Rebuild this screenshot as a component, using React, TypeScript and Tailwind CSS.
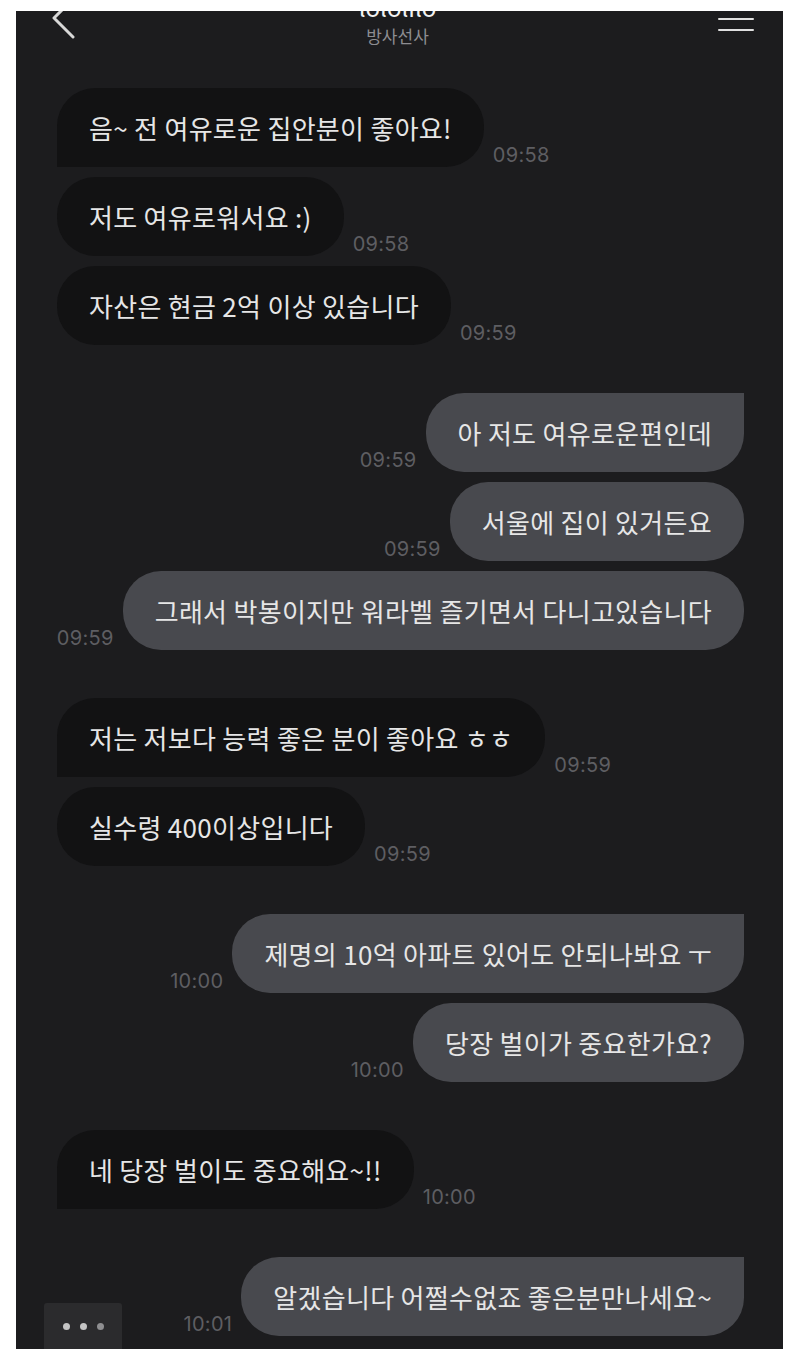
import React from "react";

type Msg = {
  text: string;
  time: string;
  mine: boolean;
  first?: boolean; // first bubble of a group gets one squared corner
  groupStart?: boolean;
};

const MESSAGES: Msg[] = [
  { text: "음~ 전 여유로운 집안분이 좋아요!", time: "09:58", mine: false, first: true, groupStart: true },
  { text: "저도 여유로워서요 :)", time: "09:58", mine: false },
  { text: "자산은 현금 2억 이상 있습니다", time: "09:59", mine: false },
  { text: "아 저도 여유로운편인데", time: "09:59", mine: true, first: true, groupStart: true },
  { text: "서울에 집이 있거든요", time: "09:59", mine: true },
  { text: "그래서 박봉이지만 워라벨 즐기면서 다니고있습니다", time: "09:59", mine: true },
  { text: "저는 저보다 능력 좋은 분이 좋아요 ㅎㅎ", time: "09:59", mine: false, first: true, groupStart: true },
  { text: "실수령 400이상입니다", time: "09:59", mine: false },
  { text: "제명의 10억 아파트 있어도 안되나봐요 ㅜ", time: "10:00", mine: true, first: true, groupStart: true },
  { text: "당장 벌이가 중요한가요?", time: "10:00", mine: true },
  { text: "네 당장 벌이도 중요해요~!!", time: "10:00", mine: false, first: true, groupStart: true },
  { text: "알겠습니다 어쩔수없죠 좋은분만나세요~", time: "10:01", mine: true, first: true, groupStart: true },
];

const KR = { fontFamily: '"Noto Sans CJK KR", "Noto Sans", sans-serif' };

function Bubble({ msg }: { msg: Msg }) {
  const time = (
    <span
      className="mb-[2px] shrink-0 text-[20px] leading-none tracking-[0.3px] text-[#5e5e62]"
      style={{ fontFamily: "Inter, sans-serif" }}
    >
      {msg.time}
    </span>
  );

  const shape = msg.mine
    ? msg.first
      ? "rounded-[38px] rounded-tr-none bg-[#48494e]"
      : "rounded-[38px] bg-[#48494e]"
    : msg.first
      ? "rounded-[38px] rounded-bl-none bg-[#121213]"
      : "rounded-[38px] bg-[#121213]";

  return (
    <div
      className={`flex items-end gap-[9px] ${msg.mine ? "justify-end" : "justify-start"} ${
        msg.groupStart ? "mt-[48px] first:mt-0" : "mt-[10px]"
      }`}
    >
      {msg.mine && time}
      <div
        className={`flex h-[79px] shrink-0 items-center whitespace-nowrap px-8 text-[26px] tracking-[0.3px] text-[#e6e6e6] ${shape}`}
        style={KR}
      >
        {msg.text}
      </div>
      {!msg.mine && time}
    </div>
  );
}

export default function App() {
  return (
    <div className="h-[1355px] w-[800px] bg-white pl-4 pt-[11px]">
      <div className="relative flex h-[1338px] w-[767px] flex-col overflow-hidden bg-[#1c1c1e]">
        {/* header */}
        <div className="relative flex h-[77px] shrink-0 items-start justify-between">
          <svg
            width="30"
            height="50"
            viewBox="0 0 30 50"
            className="ml-[31px] mt-[-19px]"
            fill="none"
          >
            <polyline
              points="26,7 7,26 26,45"
              stroke="#d8d8d8"
              strokeWidth="3"
              strokeLinecap="round"
              strokeLinejoin="round"
            />
          </svg>

          <div className="mt-[-17px] flex flex-col items-center" style={KR}>
            <span className="text-[24px] leading-[26px] text-[#f2f2f2]">lololilo</span>
            <span className="mt-[6px] text-[17px] leading-[20px] text-[#8d8d91]">방사선사</span>
          </div>

          <div className="mr-[29px] mt-[-4px] flex w-[36px] flex-col gap-[9px]">
            <div className="h-[2px] rounded-full bg-[#e0e0e0]" />
            <div className="h-[2px] rounded-full bg-[#e0e0e0]" />
            <div className="h-[2px] rounded-full bg-[#e0e0e0]" />
          </div>
        </div>

        {/* messages */}
        <div className="flex flex-col pl-[41px] pr-[39px]">
          {MESSAGES.map((m, i) => (
            <Bubble key={i} msg={m} />
          ))}
        </div>

        {/* more button */}
        <div className="absolute bottom-0 left-[28px] flex h-[46px] w-[78px] items-center justify-center gap-[10px] rounded-t-[3px] bg-[#2b2b2d]">
          <span className="h-[7px] w-[7px] rounded-full bg-[#c4c4c4]" />
          <span className="h-[7px] w-[7px] rounded-full bg-[#c4c4c4]" />
          <span className="h-[7px] w-[7px] rounded-full bg-[#8e8e90]" />
        </div>
      </div>
    </div>
  );
}
